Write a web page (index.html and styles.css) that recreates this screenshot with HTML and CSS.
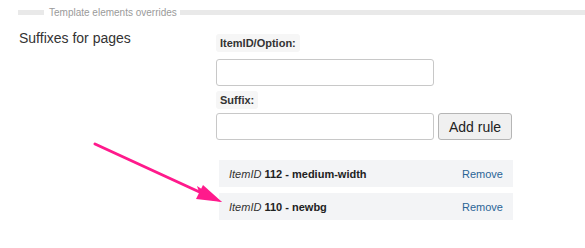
FILE: index.html
```html
<!DOCTYPE html>
<html>
<head>
<meta charset="utf-8">
<link rel="stylesheet" href="styles.css">
</head>
<body>
<div class="page">
  <div class="legend">
    <span class="bar bar-short"></span>
    <span class="legend-text">Template elements overrides</span>
    <span class="bar bar-long"></span>
  </div>
  <div class="field">
    <div class="field-label">Suffixes for pages</div>
    <div class="field-controls">
      <div class="ctl-label">ItemID/Option:</div>
      <input class="text-input" type="text">
      <div class="ctl-label ctl-label-2">Suffix:</div>
      <div class="input-row">
        <input class="text-input" type="text">
        <button class="btn">Add rule</button>
      </div>
      <div class="rules">
        <div class="rule"><span class="rule-text"><i>ItemID</i> <b>112</b> <b>- medium-width</b></span><a class="remove">Remove</a></div>
        <div class="rule"><span class="rule-text"><i>ItemID</i> <b>110</b> <b>- newbg</b></span><a class="remove">Remove</a></div>
      </div>
    </div>
  </div>
  <svg class="arrow" width="585" height="248" viewBox="0 0 585 248">
    <line x1="95" y1="144" x2="206" y2="195" stroke="#ff1a8c" stroke-width="3" stroke-linecap="round"/>
    <polygon points="222,202 197,186 201,198" fill="#ff1a8c"/>
    <polygon points="222,202 203,185 196,199" fill="#ff1a8c"/>
  </svg>
</div>
</body>
</html>
```
FILE: styles.css
```css
html, body {
  margin: 0;
  padding: 0;
  background: #fff;
}
body {
  font-family: "Liberation Sans", Arial, sans-serif;
  color: #333;
}
.page {
  position: relative;
  width: 585px;
  height: 248px;
  overflow: hidden;
}
.legend {
  display: flex;
  align-items: center;
  height: 24px;
  padding-left: 18px;
}
.bar {
  height: 5px;
  background: #e9e9e9;
}
.bar-short {
  width: 26px;
}
.bar-long {
  flex: 1;
  margin-left: 3px;
}
.legend-text {
  font-size: 10px;
  color: #9a9a9a;
  margin-left: 5px;
}
.field {
  display: flex;
  margin-top: 6px;
}
.field-label {
  flex: none;
  width: 216px;
  padding-left: 19px;
  box-sizing: border-box;
  font-size: 14px;
  line-height: 16px;
  color: #333;
}
.field-controls {
  display: flex;
  flex-direction: column;
  align-items: flex-start;
  padding-top: 4px;
}
.ctl-label {
  background: #f6f6f6;
  font-size: 11px;
  font-weight: bold;
  color: #333;
  height: 18px;
  line-height: 18px;
  padding: 0 4px;
  border-radius: 3px;
  margin-bottom: 7px;
}
.ctl-label-2 {
  margin-top: 5px;
  margin-bottom: 4px;
}
.text-input {
  width: 218px;
  height: 27px;
  box-sizing: border-box;
  border: 1px solid #c8c8c8;
  border-radius: 3px;
  margin: 0;
  padding: 0 6px;
  background: #fff;
}
.input-row {
  display: flex;
  gap: 4px;
}
.btn {
  width: 74px;
  height: 27px;
  box-sizing: border-box;
  border: 1px solid #b5b5b5;
  border-radius: 3px;
  background: #f0f0f0;
  font-family: "Liberation Sans", Arial, sans-serif;
  font-size: 14px;
  color: #222;
  padding: 0;
}
.rules {
  display: flex;
  flex-direction: column;
  gap: 6px;
  margin-top: 20px;
  margin-left: 3px;
}
.rule {
  width: 294px;
  height: 27px;
  box-sizing: border-box;
  background: #f3f4f6;
  display: flex;
  align-items: center;
  justify-content: space-between;
  padding: 0 10px;
  font-size: 11px;
  color: #222;
}
.rule-text i {
  color: #333;
}
.remove {
  color: #2a6496;
  font-size: 11px;
}
.arrow {
  position: absolute;
  left: 0;
  top: 0;
  pointer-events: none;
}
```
